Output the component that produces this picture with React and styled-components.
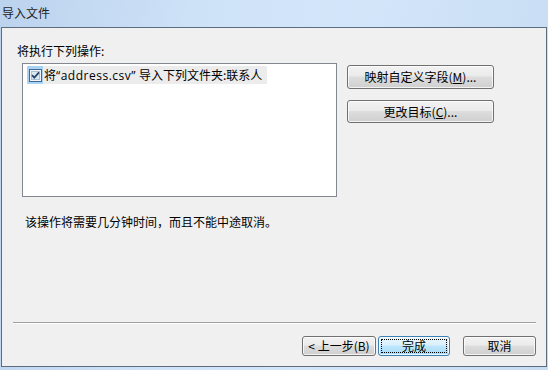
import React from 'react';
import styled, { createGlobalStyle } from 'styled-components';

const GlobalStyle = createGlobalStyle`
  html, body {
    margin: 0;
    padding: 0;
    width: 548px;
    height: 370px;
    overflow: hidden;
  }
  body {
    font-family: "Liberation Sans", "Noto Sans CJK SC", sans-serif;
    font-size: 12px;
    color: #000;
  }
`;

const Window = styled.div`
  width: 548px;
  height: 370px;
  display: flex;
  flex-direction: column;
  background: linear-gradient(100deg, #bcd3ee 0%, #cfe3f8 35%, #d3e5f9 60%, #c6dcf3 100%);
  box-sizing: border-box;
`;

const TitleBar = styled.div`
  height: 27px;
  flex: none;
  display: flex;
  align-items: center;
  padding-left: 2px;
  padding-bottom: 3px;
  box-sizing: border-box;
  font-family: "Noto Sans CJK SC", sans-serif;
  font-size: 12px;
  color: #1e1e1e;
`;

const Panel = styled.div`
  flex: 1;
  margin: 0 1px 3px 1px;
  background: #f0f0f0;
  border: 1px solid #5d6c7f;
  display: flex;
  flex-direction: column;
  box-sizing: border-box;
`;

const Label = styled.div`
  margin: 15px 0 0 15px;
  height: 16px;
  line-height: 16px;
  font-family: "Noto Sans CJK SC", sans-serif;
  font-size: 12px;
`;

const Body = styled.div`
  display: flex;
  align-items: flex-start;
  margin: 4px 0 0 20px;
`;

const ListBox = styled.div`
  width: 315px;
  height: 134px;
  box-sizing: border-box;
  background: #fff;
  border: 1px solid #828790;
  padding: 2px 0 0 4px;
`;

const Item = styled.div`
  display: flex;
  align-items: center;
  height: 18px;
`;

const CheckCell = styled.span`
  width: 16px;
  height: 18px;
  background: #a9d2f5;
  display: flex;
  align-items: center;
  justify-content: center;
`;

const ItemText = styled.span`
  height: 18px;
  line-height: 18px;
  background: #ececec;
  padding: 0 5px 0 1px;
  font-family: "Noto Sans CJK SC", sans-serif;
  font-size: 12px;
  white-space: nowrap;
`;

const Latin = styled.span`
  font-family: "Open Sans", "Noto Sans", sans-serif;
  font-size: 12px;
  letter-spacing: 0.5px;
  margin-right: 3px;
`;

const SideButtons = styled.div`
  display: flex;
  flex-direction: column;
  gap: 11px;
  margin: 2px 0 0 10px;
`;

const Button = styled.button`
  width: ${p => p.$w || 75}px;
  height: ${p => p.$h || 23}px;
  padding: 0;
  box-sizing: border-box;
  border: 1px solid ${p => (p.$default ? '#3c7fb1' : '#707070')};
  border-radius: 3px;
  background: ${p =>
    p.$default
      ? 'linear-gradient(#eaf6fd 0%, #d9f0fc 45%, #bee6fd 50%, #a7d9f5 100%)'
      : 'linear-gradient(#f2f2f2 0%, #ebebeb 45%, #dddddd 50%, #cfcfcf 100%)'};
  box-shadow: inset 0 0 0 1px rgba(255, 255, 255, 0.75);
  font-family: "Noto Sans CJK SC", sans-serif;
  font-size: 12px;
  color: #000;
  display: flex;
  align-items: center;
  justify-content: center;
  position: relative;
  line-height: 16px;
`;

const Focus = styled.span`
  position: absolute;
  inset: 2px;
  border: 1px dotted #000;
  border-radius: 1px;
`;

const Key = styled.span`
  text-decoration: underline;
`;

const Note = styled.div`
  margin: 17px 0 0 23px;
  height: 16px;
  line-height: 16px;
  font-family: "Noto Sans CJK SC", sans-serif;
  font-size: 12px;
`;

const Spacer = styled.div`
  flex: 1;
`;

const Separator = styled.div`
  margin: 0 10px 0 11px;
  height: 1px;
  background: #a0a0a0;
  border-bottom: 1px solid #fff;
`;

const Footer = styled.div`
  display: flex;
  justify-content: flex-end;
  align-items: center;
  margin: 12px 10px 10px 0;
`;

const Check = () => (
  <svg width="13" height="13" viewBox="0 0 13 13">
    <rect x="0.5" y="0.5" width="12" height="12" fill="#f4f4f4" stroke="#3d6a94" />
    <rect x="2.5" y="2.5" width="8" height="8" fill="#dce8f3" stroke="#a8c0d8" />
    <path d="M3 6.2 L5.3 8.6 L10 3.4" fill="none" stroke="#27466c" strokeWidth="1.8" />
  </svg>
);

export default function App() {
  return (
    <>
      <GlobalStyle />
      <Window>
        <TitleBar>导入文件</TitleBar>
        <Panel>
          <Label>将执行下列操作:</Label>
          <Body>
            <ListBox>
              <Item>
                <CheckCell>
                  <Check />
                </CheckCell>
                <ItemText>
                  将<Latin>“address.csv”</Latin>导入下列文件夹:联系人
                </ItemText>
              </Item>
            </ListBox>
            <SideButtons>
              <Button $w={147} $h={24}>
                映射自定义字段(<Key>M</Key>)...
              </Button>
              <Button $w={147} $h={23}>
                更改目标(<Key>C</Key>)...
              </Button>
            </SideButtons>
          </Body>
          <Note>该操作将需要几分钟时间，而且不能中途取消。</Note>
          <Spacer />
          <Separator />
          <Footer>
            <Button $w={74} $h={20}>&lt; 上一步(B)</Button>
            <Button $w={72} $h={20} $default style={{ marginLeft: 2 }}>
              <Focus />
              完成
            </Button>
            <Button $w={73} $h={20} style={{ marginLeft: 13 }}>
              取消
            </Button>
          </Footer>
        </Panel>
      </Window>
    </>
  );
}
